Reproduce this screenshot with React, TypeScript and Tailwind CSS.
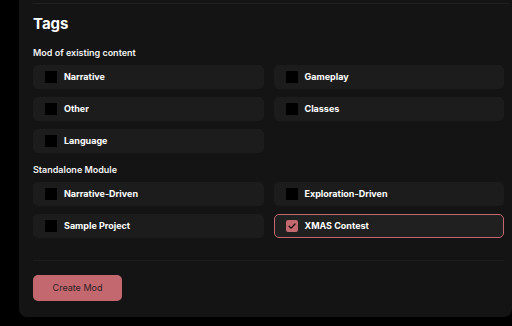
import { type ReactNode } from 'react';

interface Tag {
  label: string;
  checked?: boolean;
}

const existing: Tag[] = [
  { label: 'Narrative' },
  { label: 'Gameplay' },
  { label: 'Other' },
  { label: 'Classes' },
  { label: 'Language' },
];

const standalone: Tag[] = [
  { label: 'Narrative-Driven' },
  { label: 'Exploration-Driven' },
  { label: 'Sample Project' },
  { label: 'XMAS Contest', checked: true },
];

function TagRow({ tag }: { tag: Tag }) {
  if (tag.checked) {
    return (
      <label className="flex h-[24px] items-center gap-[7px] rounded-[5px] border border-[#c4686f] bg-[#202020] pl-[11px]">
        <span className="flex h-[12px] w-[12px] items-center justify-center rounded-[2px] bg-[#c4686f]">
          <svg viewBox="0 0 12 12" className="h-[10px] w-[10px]" fill="none">
            <path d="M2.5 6.2 L5 8.6 L9.6 3.6" stroke="#1a1212" strokeWidth="1.6" strokeLinecap="round" strokeLinejoin="round" />
          </svg>
        </span>
        <span className="text-[9px] font-bold text-white">{tag.label}</span>
      </label>
    );
  }
  return (
    <label className="flex h-[24px] items-center gap-[7px] rounded-[5px] bg-[#1c1c1c] pl-[12px]">
      <span className="h-[12px] w-[12px] bg-black" />
      <span className="text-[9px] font-bold text-white">{tag.label}</span>
    </label>
  );
}

function Group({ title, tags }: { title: string; tags: Tag[] }): ReactNode {
  return (
    <>
      <p className="h-[12px] text-[9px] font-semibold leading-[12px] text-[#f2f2f2]">{title}</p>
      <div className="mt-[6px] grid grid-cols-2 gap-x-[10px] gap-y-[8px]">
        {tags.map((t) => (
          <TagRow key={t.label} tag={t} />
        ))}
      </div>
    </>
  );
}

export default function App() {
  return (
    <div className="h-[326px] w-[512px] overflow-hidden bg-black font-['Inter',sans-serif]">
      <div className="ml-[19px] rounded-b-[8px] bg-[#141414] pb-[16px] pl-[14px] pr-[8px]">
        <div className="-mr-[5px] h-px translate-y-[3px] bg-[#202020]" />
        <h2 className="mt-[13px] h-[20px] text-[15px] font-bold leading-[20px] text-white">Tags</h2>
        <div className="mt-[13px]">
          <Group title="Mod of existing content" tags={existing} />
        </div>
        <div className="mt-[11px]">
          <Group title="Standalone Module" tags={standalone} />
        </div>
        <div className="mt-[22px] h-px bg-[#1e1e1e]" />
        <button className="mt-[14px] h-[26px] w-[89px] rounded-[5px] bg-[#c4686f] text-[9px] text-[#2e2022]">
          Create Mod
        </button>
      </div>
    </div>
  );
}
